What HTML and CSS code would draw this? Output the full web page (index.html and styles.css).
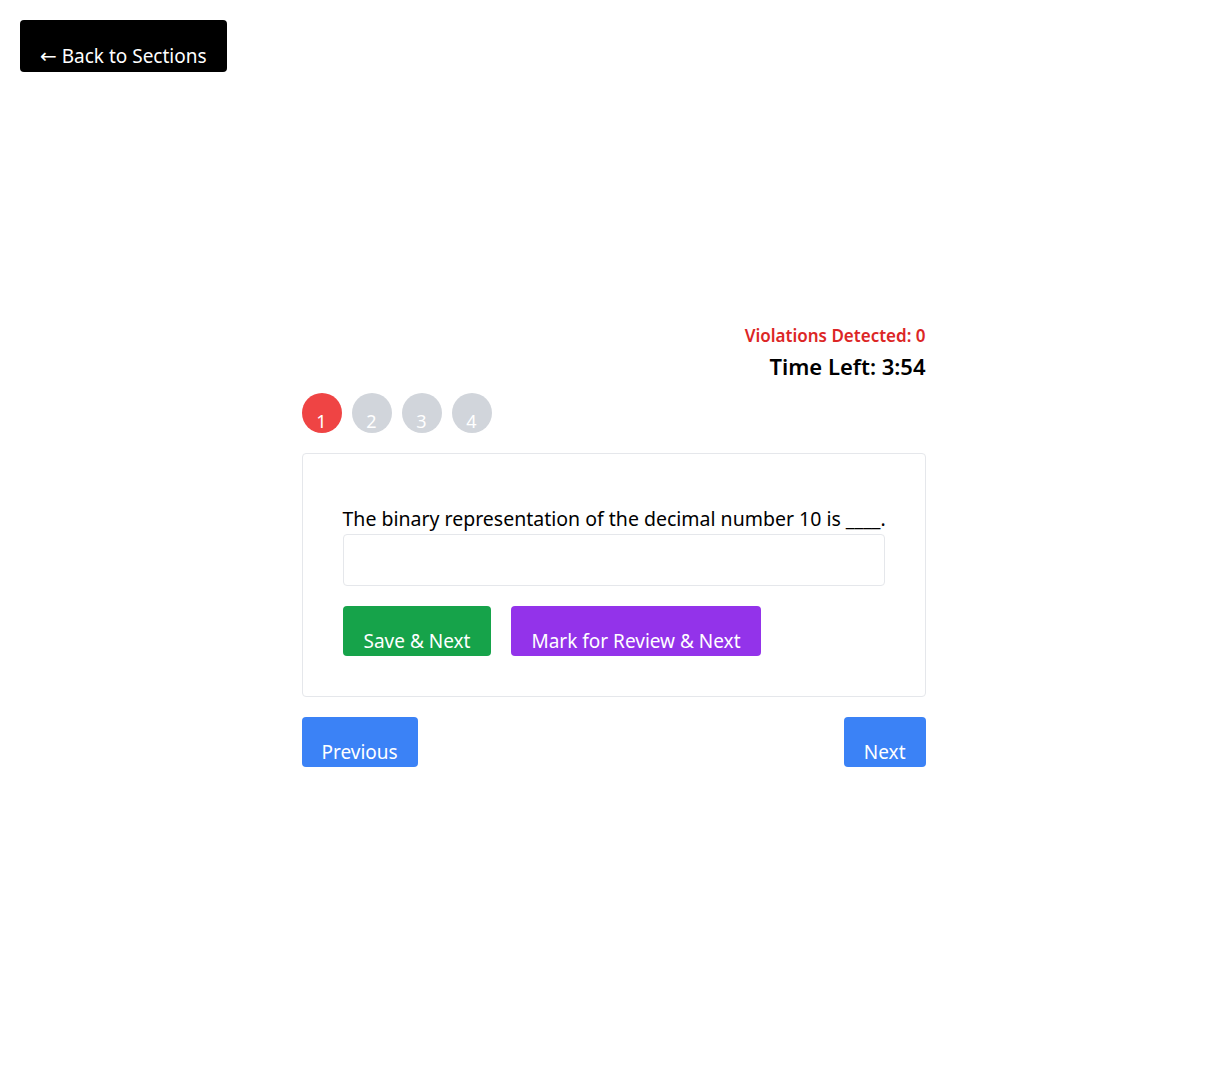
FILE: index.html
```html
<!DOCTYPE html>
<html lang="en">
<head>
<meta charset="utf-8">
<title>Quiz</title>
<link rel="stylesheet" href="styles.css">
</head>
<body>
<div class="page">
  <button class="back"><span class="arrow">←</span> Back to Sections</button>
  <main class="exam">
    <div class="status">
      <div class="violations">Violations Detected: 0</div>
      <div class="timer">Time Left: 3:54</div>
    </div>
    <div class="dots">
      <span class="dot active">1</span>
      <span class="dot">2</span>
      <span class="dot">3</span>
      <span class="dot">4</span>
    </div>
    <section class="card">
      <p class="question">The binary representation of the decimal number 10 is ____.</p>
      <input class="answer" type="text">
      <div class="actions">
        <button class="btn green save">Save &amp; Next</button>
        <button class="btn purple">Mark for Review &amp; Next</button>
      </div>
    </section>
    <div class="nav">
      <button class="btn blue">Previous</button>
      <button class="btn blue">Next</button>
    </div>
  </main>
</div>
</body>
</html>
```

FILE: styles.css
```css
* { box-sizing: border-box; }
body {
  margin: 0;
  font-family: "Noto Sans", "Open Sans", sans-serif;
  color: #000;
  background: #fff;
}
.page {
  padding: 20px;
}
button {
  font-family: inherit;
  border: none;
  color: #fff;
  cursor: pointer;
}
.back {
  display: block;
  height: 52px;
  padding: 20px 20px 0;
  line-height: 32px;
  font-size: 19px;
  background: #000;
  border-radius: 4px;
}
.arrow {
  font-family: "DejaVu Sans", sans-serif;
  font-size: 20px;
}
.exam {
  width: 624px;
  margin: 249px auto 0;
}
.status {
  text-align: right;
}
.violations {
  color: #dc2626;
  font-weight: 600;
  font-size: 17px;
  line-height: 30px;
}
.timer {
  font-weight: 600;
  font-size: 22px;
  line-height: 31px;
}
.dots {
  display: flex;
  gap: 10px;
  margin-top: 11px;
}
.dot {
  width: 40px;
  height: 40px;
  border-radius: 50%;
  background: #d1d5db;
  color: #fff;
  text-align: center;
  font-size: 18px;
  padding-top: 16px;
  line-height: 24px;
  overflow: hidden;
}
.dot.active { background: #ef4444; }
.card {
  margin-top: 20px;
  border: 1px solid #e5e7eb;
  border-radius: 4px;
  padding: 40px;
}
.question {
  margin: 0;
  padding-top: 10px;
  font-size: 19.5px;
  line-height: 30px;
  white-space: nowrap;
}
.answer {
  display: block;
  width: 100%;
  height: 52px;
  border: 1px solid #e5e7eb;
  border-radius: 4px;
  font-size: 18px;
  padding: 0 12px;
}
.actions {
  display: flex;
  gap: 20px;
  margin-top: 20px;
}
.btn {
  height: 50px;
  padding: 20px 20px 0;
  line-height: 30px;
  font-size: 19px;
  border-radius: 4px;
}
.btn.save {
  padding-left: 21px;
  padding-right: 21px;
}
.green { background: #16a34a; }
.purple { background: #9333ea; }
.blue { background: #3b82f6; }
.nav {
  display: flex;
  justify-content: space-between;
  margin-top: 20px;
}
```
